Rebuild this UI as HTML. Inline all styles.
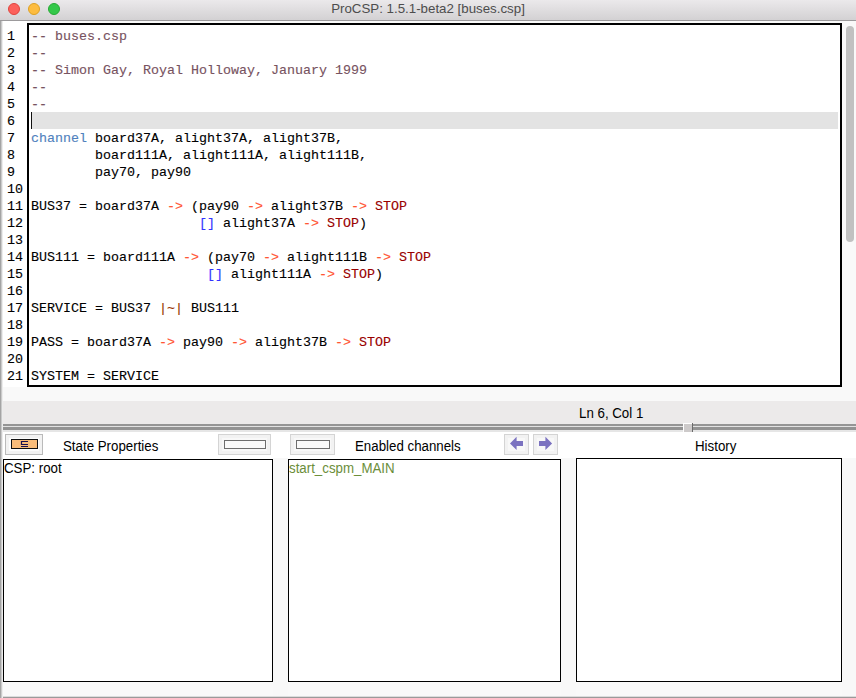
<!DOCTYPE html>
<html><head><meta charset="utf-8">
<style>
*{margin:0;padding:0;box-sizing:border-box}
html,body{width:856px;height:698px;overflow:hidden;background:#fff;font-family:"Liberation Sans",sans-serif}
.abs{position:absolute}
#title{left:0;top:0;width:856px;height:21px;background:linear-gradient(#ebe9eb,#d3d1d3);border-bottom:1px solid #9c9a9c}
.tl{position:absolute;top:3px;width:12px;height:12px;border-radius:50%}
#ttext{left:0;top:1px;width:856px;line-height:15px;text-align:center;font-size:13.3px;color:#4d4d4d}
#edarea{left:0;top:21px;width:856px;height:380px;background:#f9f9f9}
#gutter{left:2px;top:21px;width:25px;height:366px;background:#fff}
#editor{left:27px;top:23px;width:815px;height:364px;border:2px solid #000;background:#fff}
#curline{left:32px;top:112px;width:806px;height:17px;background:#e3e3e3}
#caret{left:31px;top:112px;width:1px;height:17px;background:#111}
.code{font-family:"Liberation Mono",monospace;font-size:13.33px;line-height:17px;white-space:pre;-webkit-text-stroke:0.12px currentColor}
#lnums{left:2px;top:28px;width:25px;color:#000}
#lnums div{padding-left:5px}
#lines{left:31px;top:28px;color:#000}
.cm{color:#775260}
.kw{color:#4f81bd}
.op{color:#ff5533}
.st{color:#990000}
.ch{color:#3333ff}
.ic{color:#993300}
#sbar{left:843px;top:21px;width:13px;height:380px;background:#f9f9f9}
#thumb{left:846px;top:26px;width:8px;height:216px;border-radius:4px;background:#c1c1c1}
#status{left:2px;top:401px;width:854px;height:23px;background:#eceaea}
#stext{left:579px;top:406px;font-size:13.3px;line-height:15px;color:#000;transform:scaleY(1.07);transform-origin:0 12px}
.btn{position:absolute;border:1px solid #d4d4d4;background:#f2f2f2}
.btn i{position:absolute;left:3px;top:3px;right:3px;bottom:3px;background:#f8f8f8}
.panel{position:absolute;border:1px solid #000;background:#fff}
.lbl{position:absolute;font-size:13.3px;line-height:15px;color:#000;white-space:nowrap;transform:scaleY(1.07);transform-origin:0 12px}
</style></head><body>
<div id="title" class="abs">
 <div class="tl" style="left:8px;background:#fc605b;border:1px solid #e0443e"></div>
 <div class="tl" style="left:28px;background:#fdbc40;border:1px solid #dea123"></div>
 <div class="tl" style="left:48px;background:#34c84a;border:1px solid #27aa35"></div>
</div>
<div id="ttext" class="abs">ProCSP: 1.5.1-beta2 [buses.csp]</div>
<div id="edarea" class="abs"></div>
<div id="gutter" class="abs"></div>
<div id="editor" class="abs"></div>
<div id="curline" class="abs"></div>
<div id="caret" class="abs"></div>
<div id="lnums" class="abs code"><div>1</div><div>2</div><div>3</div><div>4</div><div>5</div><div>6</div><div>7</div><div>8</div><div>9</div><div>10</div><div>11</div><div>12</div><div>13</div><div>14</div><div>15</div><div>16</div><div>17</div><div>18</div><div>19</div><div>20</div><div>21</div></div>
<div id="lines" class="abs code"><span class="cm">-- buses.csp</span>
<span class="cm">--</span>
<span class="cm">-- Simon Gay, Royal Holloway, January 1999</span>
<span class="cm">--</span>
<span class="cm">--</span>

<span class="kw">channel</span> board37A, alight37A, alight37B,
        board111A, alight111A, alight111B,
        pay70, pay90

BUS37 = board37A <span class="op">-&gt;</span> (pay90 <span class="op">-&gt;</span> alight37B <span class="op">-&gt;</span> <span class="st">STOP</span>
                     <span class="ch">[]</span> alight37A <span class="op">-&gt;</span> <span class="st">STOP</span>)

BUS111 = board111A <span class="op">-&gt;</span> (pay70 <span class="op">-&gt;</span> alight111B <span class="op">-&gt;</span> <span class="st">STOP</span>
                      <span class="ch">[]</span> alight111A <span class="op">-&gt;</span> <span class="st">STOP</span>)

SERVICE = BUS37 <span class="ic">|~|</span> BUS111

PASS = board37A <span class="op">-&gt;</span> pay90 <span class="op">-&gt;</span> alight37B <span class="op">-&gt;</span> <span class="st">STOP</span>

SYSTEM = SERVICE</div>
<div id="sbar" class="abs"></div>
<div id="thumb" class="abs"></div>
<div id="status" class="abs"></div>
<div id="stext" class="abs">Ln 6, Col 1</div>
<!-- splitter -->
<div class="abs" style="left:2px;top:424px;width:854px;height:2px;background:#959595"></div>
<div class="abs" style="left:2px;top:426px;width:854px;height:1px;background:#e2e2e2"></div>
<div class="abs" style="left:2px;top:427px;width:854px;height:3px;background:#939393"></div>
<div class="abs" style="left:2px;top:430px;width:854px;height:2px;background:#e6e6e6"></div>
<div class="abs" style="left:683px;top:423px;width:10px;height:10px;background:#6a6a6a"></div>
<div class="abs" style="left:683px;top:423px;width:9px;height:9px;background:#fff"></div>
<div class="abs" style="left:684px;top:424px;width:8px;height:8px;background:#cdcaca"></div>
<!-- bottom -->
<div class="abs" style="left:2px;top:432px;width:854px;height:266px;background:#fff"></div>
<div class="btn" style="left:5px;top:434px;width:38px;height:21px;border-color:#bababa"><i style="background:#fcfcfc"></i></div>
<div class="abs" style="left:11px;top:439px;width:27px;height:10px;background:#f9bc7a;border:1px solid #111"></div>
<svg class="abs" style="left:0;top:0" width="856" height="698">
 <path d="M28 441.5 H21.5 V444.5 H28 M21 446.5 H28" fill="none" stroke="#1a1050" stroke-width="1.2"/>
</svg>
<div class="btn" style="left:218px;top:434px;width:53px;height:21px"><i></i></div>
<div class="abs" style="left:224px;top:440px;width:42px;height:9px;background:#fafafa;border:1px solid #6e6e6e"></div>
<div class="btn" style="left:290px;top:434px;width:45px;height:21px"><i></i></div>
<div class="abs" style="left:296px;top:440px;width:34px;height:9px;background:#fafafa;border:1px solid #6e6e6e"></div>
<div class="btn" style="left:504px;top:434px;width:25px;height:21px"><i></i></div>
<div class="btn" style="left:533px;top:434px;width:25px;height:21px"><i></i></div>
<svg class="abs" style="left:0;top:0" width="856" height="698">
 <path d="M510 443.4 L516.6 436.8 L516.6 441.1 L523 441.1 L523 446 L516.6 446 L516.6 450 Z" fill="#7b72c0"/>
 <path d="M552.1 443.4 L545.4 436.8 L545.4 441.1 L539 441.1 L539 446 L545.4 446 L545.4 450 Z" fill="#7b72c0"/>
</svg>
<div class="lbl" style="left:63px;top:439px">State Properties</div>
<div class="lbl" style="left:355px;top:439px">Enabled channels</div>
<div class="lbl" style="left:695px;top:439px">History</div>
<div class="abs" style="left:2px;top:682px;width:854px;height:14px;background:#f9f9f9"></div>
<div class="abs" style="left:273px;top:458px;width:15px;height:238px;background:#f8f8f8"></div>
<div class="abs" style="left:561px;top:458px;width:15px;height:238px;background:#f8f8f8"></div>
<div class="abs" style="left:842px;top:458px;width:14px;height:238px;background:#f8f8f8"></div>
<div class="abs" style="left:2px;top:696px;width:854px;height:1px;background:#dcdcdc"></div><div class="abs" style="left:2px;top:697px;width:854px;height:1px;background:#9a9a9a"></div>
<div class="panel" style="left:3px;top:459px;width:270px;height:223px"></div>
<div class="panel" style="left:288px;top:459px;width:273px;height:223px"></div>
<div class="panel" style="left:576px;top:458px;width:266px;height:224px"></div>
<div class="lbl" style="left:4px;top:461px">CSP: root</div>
<div class="lbl" style="left:289px;top:461px;color:#6b8e3a">start_cspm_MAIN</div>
<!-- left edge -->
<div class="abs" style="left:0;top:21px;width:1px;height:677px;background:#a4a4a4"></div>
<div class="abs" style="left:1px;top:21px;width:1px;height:677px;background:#cacaca"></div>
<div class="abs" style="left:2px;top:21px;width:1px;height:677px;background:#ececec"></div>
</body></html>
